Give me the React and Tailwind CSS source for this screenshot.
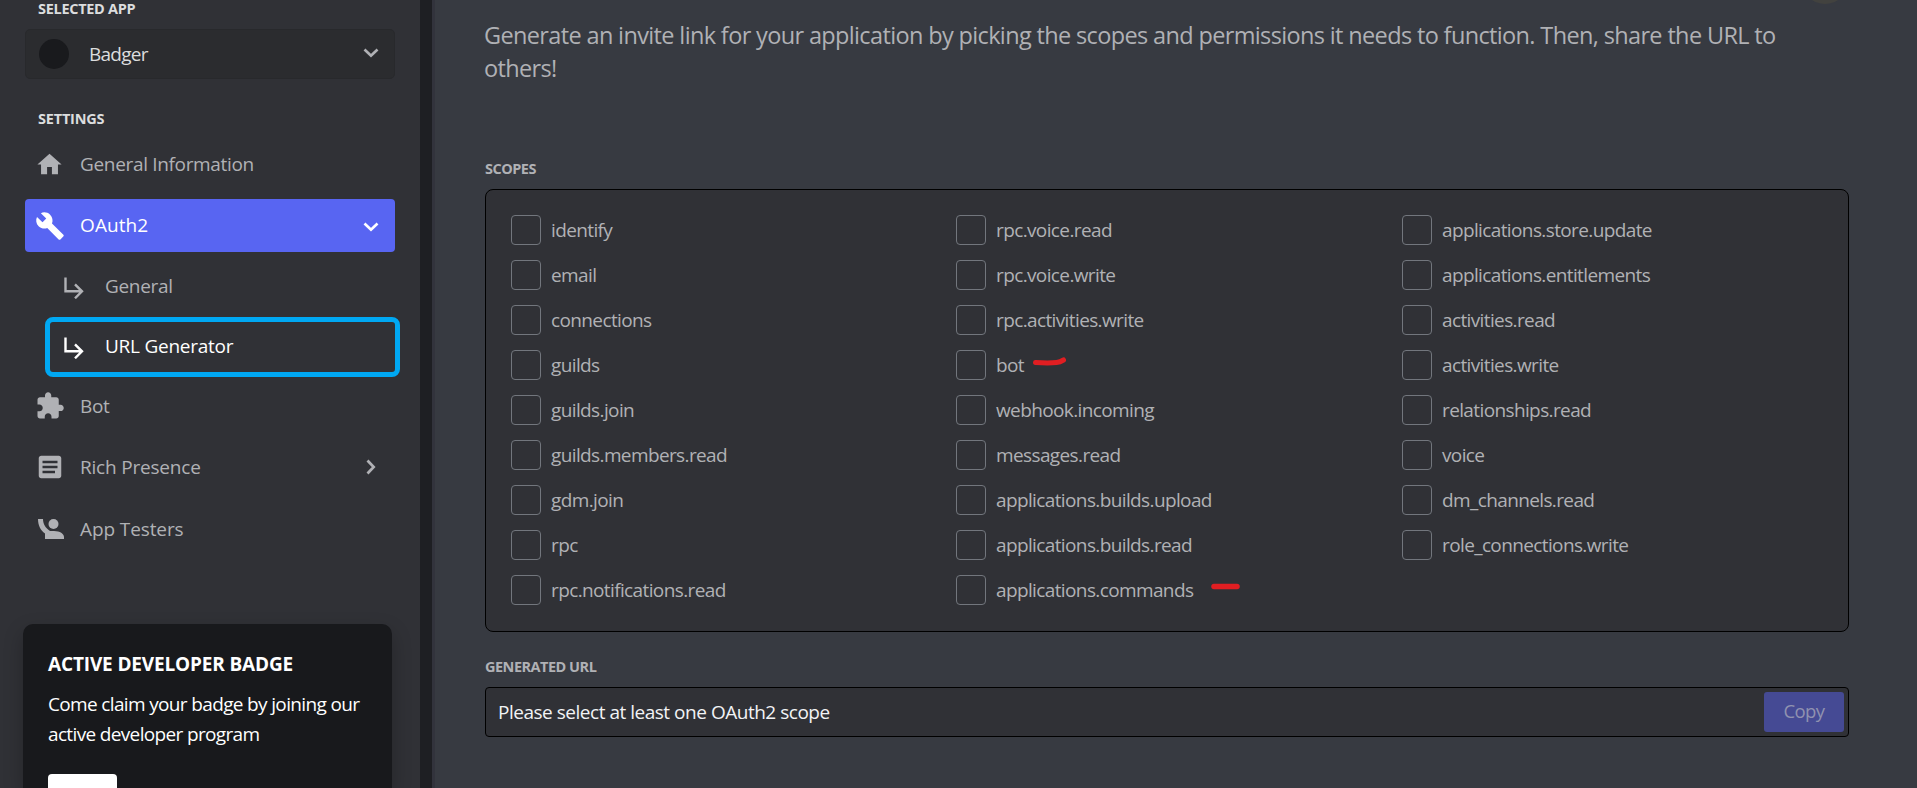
import React from "react";

const columns = [
  ["identify", "email", "connections", "guilds", "guilds.join", "guilds.members.read", "gdm.join", "rpc", "rpc.notifications.read"],
  ["rpc.voice.read", "rpc.voice.write", "rpc.activities.write", "bot", "webhook.incoming", "messages.read", "applications.builds.upload", "applications.builds.read", "applications.commands"],
  ["applications.store.update", "applications.entitlements", "activities.read", "activities.write", "relationships.read", "voice", "dm_channels.read", "role_connections.write"],
];

const marks = {
  bot: (
    <svg className="ml-[8px] mt-[-8px] h-3 w-[36px]" viewBox="0 0 36 12" fill="none" stroke="#e01e22" strokeWidth="5" strokeLinecap="round" strokeLinejoin="round">
      <path d="M3.500 7.500c7 .4 15 .6 21 0 2.500-.3 4.500-1 7-2.500" />
    </svg>
  ),
  "applications.commands": (
    <svg className="ml-[17px] mt-[-7px] h-3 w-[32px]" viewBox="0 0 32 12" fill="none" stroke="#e01e22" strokeWidth="5.500" strokeLinecap="round">
      <path d="M4 6.500h23" />
    </svg>
  ),
};

function Icon({ d, className }) {
  return (
    <svg viewBox="0 0 24 24" fill="currentColor" className={className}>
      <path d={d} />
    </svg>
  );
}

const paths = {
  home: "M10 20v-6h4v6h5v-8h3L12 3 2 12h3v8z",
  wrench: "M22.700 19l-9.100-9.100c.9-2.300.4-5-1.500-6.900-2-2-5-2.400-7.400-1.300L9 6 6 9 1.600 4.700C.4 7.100.9 10.100 2.900 12.100c1.900 1.900 4.600 2.400 6.900 1.500l9.100 9.100c.4.4 1 .4 1.400 0l2.300-2.300c.5-.4.5-1.100.1-1.400z",
  puzzle: "M20.500 11H19V7c0-1.100-.9-2-2-2h-4V3.500C13 2.120 11.880 1 10.500 1S8 2.120 8 3.500V5H4c-1.100 0-1.990.9-1.990 2v3.800H3.500c1.490 0 2.700 1.210 2.700 2.700s-1.210 2.700-2.700 2.700H2V20c0 1.100.9 2 2 2h3.800v-1.500c0-1.490 1.210-2.700 2.700-2.700 1.490 0 2.700 1.210 2.700 2.700V22H17c1.100 0 2-.9 2-2v-4h1.500c1.380 0 2.500-1.120 2.500-2.500S21.880 11 20.500 11z",
  article: "M19 3H5c-1.100 0-2 .9-2 2v14c0 1.100.9 2 2 2h14c1.100 0 2-.9 2-2V5c0-1.100-.9-2-2-2zm-3 14H6v-2h10v2zm2-4H6v-2h12v2zm0-4H6V7h12v2z",
};

function Chevron({ className }) {
  return (
    <svg viewBox="0 0 16 10" fill="none" stroke="currentColor" strokeWidth="2.700" className={className}>
      <path d="M1.500 1.500 8 7.700l6.500-6.200" />
    </svg>
  );
}

function SubArrow() {
  return (
    <svg viewBox="0 0 20 22" fill="none" stroke="currentColor" strokeWidth="2.400" className="mt-[3px] h-[22px] w-5">
      <path d="M1.500 0.500v13.800h16M11 7.300l7 7-7 7" />
    </svg>
  );
}

function Sidebar() {
  return (
    <aside className="flex h-full w-[420px] shrink-0 flex-col bg-[#303136] text-[#b0b1b5]">
      <div className="flex h-[29px] shrink-0 items-start pl-[38px] text-[14.500px] leading-[18px] font-bold tracking-[-0.3px] text-[#dcddde]">SELECTED APP</div>
      <div className="ml-[25px] flex h-[50px] w-[370px] shrink-0 items-center rounded-[5px] border border-[#28292c] bg-[#2b2c2f] pl-[13px]">
        <span className="size-[30px] rounded-full bg-[#191a1d]" />
        <span className="ml-5 flex-1 text-[19px] font-medium tracking-[-0.75px] text-[#dcddde]">Badger</span>
        <Chevron className="mr-[15px] mb-[2px] h-[10px] w-4" />
      </div>
      <div className="flex h-[58px] shrink-0 items-end pb-[9px] pl-[38px] text-[14.500px] leading-[18px] font-bold tracking-[-0.2px] text-[#dcddde]">SETTINGS</div>
      <nav className="ml-[25px] flex w-[375px] shrink-0 flex-col text-[19px] tracking-[-0.33px]">
        <div className="flex h-[54px] items-center pl-[10px]">
          <Icon d={paths.home} className="size-[29px]" />
          <span className="ml-4">General Information</span>
        </div>
        <div className="mt-2 flex h-[53px] w-[370px] items-center rounded bg-[#5865f2] pl-[10px] text-white">
          <Icon d={paths.wrench} className="size-[30px]" />
          <span className="ml-[15px] flex-1 tracking-[0.1px]">OAuth2</span>
          <Chevron className="mr-4 mt-[3px] h-[10px] w-4" />
        </div>
        <div className="mt-2 flex h-[53px] items-center pl-[39px]">
          <SubArrow />
          <span className="ml-[21px]">General</span>
        </div>
        <div className="mt-1 ml-5 flex h-[60px] w-[355px] items-center rounded-lg border-[5px] border-[#00a8f3] pb-[2px] pl-[14px] text-white">
          <SubArrow />
          <span className="ml-[21px] tracking-[-0.25px]">URL Generator</span>
        </div>
        <div className="mt-[2px] flex h-[54px] items-center pl-[10px]">
          <Icon d={paths.puzzle} className="size-[30px]" />
          <span className="ml-[15px]">Bot</span>
        </div>
        <div className="mt-[7px] flex h-[54px] items-center pl-[10px]">
          <Icon d={paths.article} className="size-[30px]" />
          <span className="ml-[15px] flex-1 tracking-[-0.2px]">Rich Presence</span>
          <Chevron className="mr-[21px] h-[10px] w-4 -rotate-90" />
        </div>
        <div className="mt-2 flex h-[54px] items-center pl-[13px]">
          <svg viewBox="0 0 26 20" fill="currentColor" className="h-5 w-[26px]">
            <circle cx="15.500" cy="5" r="5" />
            <path d="M0 0h5c0 5 2.500 9 7 12h4c6 0 10 2.800 10 6v2H7v-5.500C2.500 11.500 0 6 0 0z" />
          </svg>
          <span className="ml-4 tracking-[-0.1px]">App Testers</span>
        </div>
      </nav>
      <div className="mt-[68px] ml-[23px] flex w-[369px] flex-1 flex-col items-start rounded-t-[10px] bg-[#18191c] px-[25px] pt-[29px] text-white shadow-[0_8px_20px_rgba(0,0,0,0.24)]">
        <div className="text-[19px] leading-[22px] font-bold tracking-[-0.15px] whitespace-nowrap">ACTIVE DEVELOPER BADGE</div>
        <p className="mt-[14px] text-[19px] leading-[30px] tracking-[-0.65px] whitespace-nowrap">
          Come claim your badge by joining our
          <br />
          active developer program
        </p>
        <div className="mt-[25px] h-[14px] w-[69px] rounded-t bg-white" />
      </div>
    </aside>
  );
}

function Scopes() {
  return (
    <div className="grid h-[443px] w-[1364px] grid-cols-[445px_446px_1fr] rounded-lg border border-black bg-[#303136] pt-[17px] pl-[25px]">
      {columns.map((items, i) => (
        <div key={i} className="flex flex-col">
          {items.map((label) => (
            <label key={label} className="flex h-[45px] items-center">
              <span className="size-[30px] rounded border border-[#72767d]" />
              <span className="ml-[10px] pt-[2px] text-[19px] tracking-[-0.62px]">{label}</span>
              {marks[label]}
            </label>
          ))}
        </div>
      ))}
    </div>
  );
}

export default function App() {
  return (
    <div className="flex h-[788px] w-[1917px] overflow-hidden bg-[#36393f] font-['Open_Sans',sans-serif]">
      <Sidebar />
      <div className="w-3 shrink-0 bg-[#1e1f23]" />
      <div className="w-[3px] shrink-0 bg-[#32333c]" />
      <main className="relative flex-1 bg-[#373a41] pl-[50px] text-[#b0b1b5]">
        <span className="absolute top-[-42px] left-[1367px] size-[46px] rounded-full bg-[#42423f]" />
        <p className="-ml-px pt-[19px] text-[23.500px] leading-[33px] tracking-[-0.64px] whitespace-nowrap">
          Generate an invite link for your application by picking the scopes and permissions it needs to function. Then, share the URL to
          <br />
          others!
        </p>
        <div className="mt-[75px] mb-[11px] text-[14.500px] leading-[18px] font-bold tracking-[-0.5px]">SCOPES</div>
        <Scopes />
        <div className="mt-[26px] mb-[11px] text-[14.500px] leading-[18px] font-bold tracking-[-0.5px]">GENERATED URL</div>
        <div className="flex h-[50px] w-[1364px] items-center rounded border border-black bg-[#303136] pr-1 pl-3">
          <span className="flex-1 text-[19px] tracking-[-0.48px] text-[#f2f3f5]">Please select at least one OAuth2 scope</span>
          <button className="h-10 w-20 rounded-[3px] bg-[#454a94] pb-[3px] text-[18.500px] tracking-[-0.6px] text-[#9092b0]">Copy</button>
        </div>
      </main>
    </div>
  );
}
